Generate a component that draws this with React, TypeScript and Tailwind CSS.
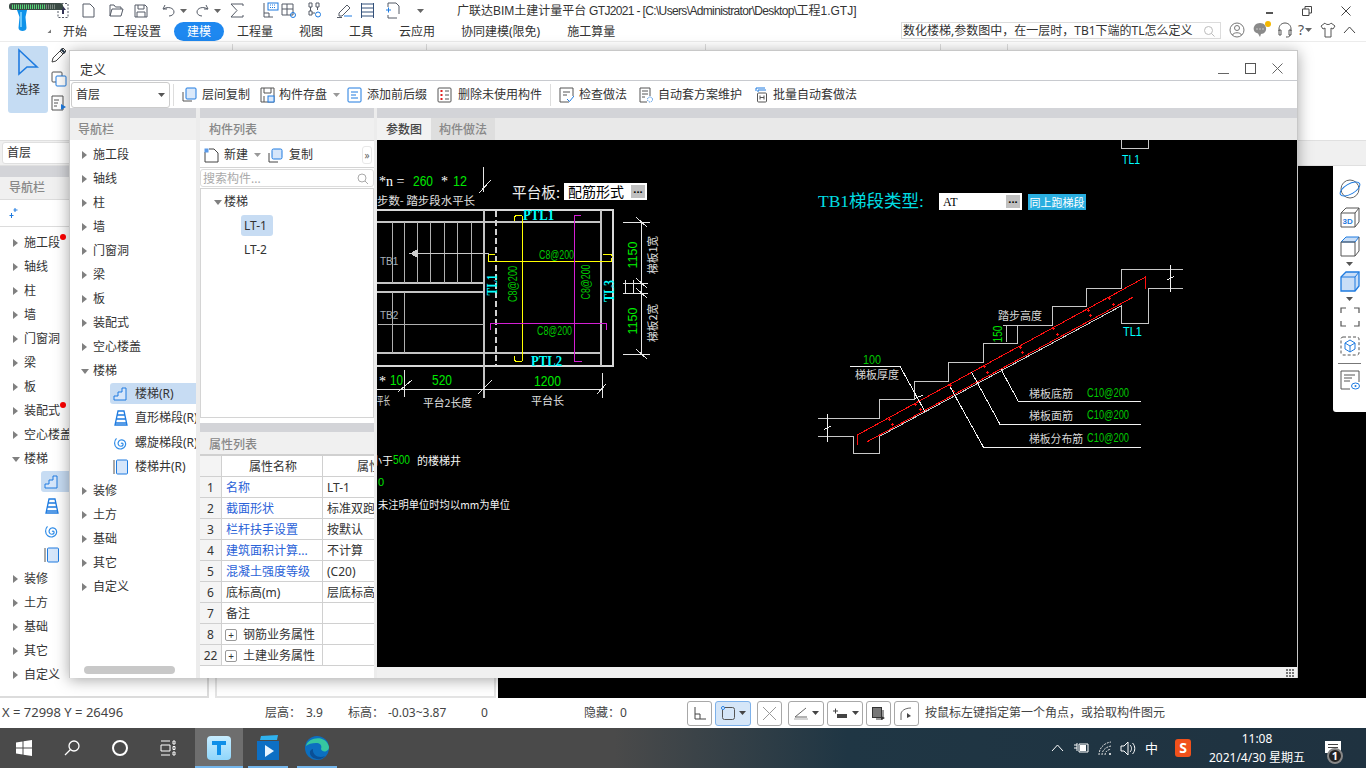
import React from "react";

const B = "#1e7be0";
const G = "#555b66";

function I({ children, w = 16, h = 16 }: { children: React.ReactNode; w?: number; h?: number }) {
  return (
    <svg width={w} height={h} viewBox={`0 0 ${w} ${h}`} fill="none" stroke={G} strokeWidth={1} className="shrink-0">
      {children}
    </svg>
  );
}
const Drop = ({ c = "#666" }: { c?: string }) => (
  <svg width="7" height="4" viewBox="0 0 7 4" className="shrink-0"><path d="M0 0h7L3.5 4z" fill={c} /></svg>
);
const RightTri = () => (
  <svg width="5" height="8" viewBox="0 0 5 8" className="shrink-0"><path d="M0 0l5 4-5 4z" fill="#808080" /></svg>
);
const DownTri = () => (
  <svg width="8" height="5" viewBox="0 0 8 5" className="shrink-0"><path d="M0 0h8L4 5z" fill="#808080" /></svg>
);

const StairIcon = () => (
  <I w={14} h={14}><path d="M1 13h12V1H9v4H5v4H1z" stroke={B} fill="#d6e6fa" /></I>
);
const FlightIcon = () => (
  <I w={16} h={16}><path d="M5 1h6l3 14H2zM4.4 5h7.2M3.5 9h9M2.6 13h10.8" stroke={B} strokeWidth={1.3} /></I>
);
const SpiralIcon = () => (
  <I w={16} h={16}><path d="M8 8.5c1-1 2.5 0 2 1.5-.6 1.7-3.6 1.7-4.6-.3C4.3 7.5 6 4.5 9 4.8c3 .3 4.5 3.7 3.2 6.3C10.8 14 6.5 15 3.8 12.8 1 10.5.8 6 3.5 3.3" stroke="#2f8ce8" strokeWidth={1.2} /></I>
);
const WellIcon = () => (
  <I w={16} h={16}><path d="M1 1v14" stroke="#555" /><rect x="3.5" y="1" width="11" height="14" rx="1" stroke={B} fill="#d6e6fa" /></I>
);

function Tree({ items }: { items: string[] }) {
  return (
    <>
      {items.map((t) => (
        <div key={t} className="flex h-6 items-center">
          <span className="flex w-[5px]"><RightTri /></span>
          <span className="ml-[6px] whitespace-nowrap">{t}</span>
        </div>
      ))}
    </>
  );
}

function T({ x, y, c = "#fff", s = 11, rot, f, w, children }: { x: number; y: number; c?: string; s?: number; rot?: number; f?: string; w?: number; children: React.ReactNode }) {
  return (
    <text
      x={x}
      y={y}
      fill={c}
      stroke="none"
      fontSize={s}
      dominantBaseline="central"
      textAnchor={rot ? "middle" : "start"}
      textLength={w}
      lengthAdjust={w ? "spacingAndGlyphs" : undefined}
      fontFamily={f ?? "'Noto Sans CJK SC', sans-serif"}
      transform={rot ? `rotate(${rot} ${x} ${y})` : undefined}
      textRendering="optimizeSpeed"
    >
      {children}
    </text>
  );
}

const MONO = "'Liberation Sans', sans-serif";
const SER = "'Liberation Serif', 'Noto Sans CJK SC', serif";
const Sx = (z: number) => 800 + z / 3;
const Sy = (z: number) => 140 + z / 3;
const P = (pts: number[]) => {
  let s = "";
  for (let i = 0; i < pts.length; i += 2) s += `${Sx(pts[i])},${Sy(pts[i + 1])} `;
  return s;
};

function Cad() {
  const stepsA = [392, 404, 417, 430, 444, 457, 471];
  const dotsA = [[268, 838], [345, 792], [450, 736], [553, 679], [660, 622], [760, 565], [865, 510], [928, 475], [278, 853], [362, 808], [460, 755], [562, 697], [667, 637], [772, 583], [871, 526], [940, 493]];
  return (
    <svg viewBox="377 140 920 527" width="920" height="527" className="block">
      <rect x="377" y="140" width="920" height="527" fill="#000" />
      <g shapeRendering="crispEdges" fill="none">
        <g stroke="#c4c4c4" strokeWidth={2}>
          <path d="M377 210H613V366H377" stroke="#d8d8d8" />
          <path d="M377 222H601M484 210V398M601 210V366M377 283H484M377 292H484M377 353H601" />
        </g>
        <path d="M496 211V366" stroke="#d0d0d0" strokeWidth={2} strokeDasharray="6 3" />
        <g stroke="none" fill="#b0b0b0">
          {stepsA.map((x) => <rect key={x} x={x} y={222} width={1} height={61} />)}
          <rect x={392} y={292} width={1} height={61} />
          <rect x={404} y={292} width={1} height={61} />
          <rect x={378} y={324} width={106} height={1} />
        </g>
        <path d="M409 253.5H488V261" stroke="#c8c8c8" />
        <path d="M417 250V257L411 253.5z" fill="#ccc" stroke="#ccc" />
        <g stroke="#ffff00">
          <path d="M522 215Q522 215 518 215T514 221" />
          <path d="M522 361Q522 362 518 362T514 356" />
          <path d="M489 261Q487 254 491 254T494 255" />
          <path d="M611 261Q614 254 609 254T603 254" />
        </g>
        <g stroke="none" fill="#ffff00">
          <rect x={522} y={216} width={1} height={145} />
          <rect x={488} y={261} width={124} height={1} />
        </g>
        <g stroke="none" fill="#d41fd4">
          <rect x={574} y={215} width={1} height={147} />
          <rect x={574} y={215} width={7} height={1} />
          <rect x={574} y={361} width={8} height={1} />
          <rect x={490} y={323} width={117} height={1} />
          <rect x={490} y={323} width={1} height={7} />
          <rect x={606} y={323} width={1} height={7} />
        </g>
        <g stroke="#e6e6e6">
          <path d="M623 222H650M623 283H648M623 293H648M623 354H650M641.5 222V354M625.5 280V293M633.5 280V293" />
          <path d="M636 217L647 227M636 278L647 288M636 288L647 298M636 349L647 359" />
          <path d="M377 389.5H602M404.5 370V397M602.5 373V398M483.5 167V192M479 193L491 180M398 392L412 380M478 394L492 380M597 394L606 384" />
        </g>
        <g stroke="#c8c8c8">
          <polyline points={P([54, 835, 238, 835, 238, 778, 342, 778, 342, 724, 445, 724, 445, 667, 550, 667, 550, 610, 653, 610, 653, 556, 757, 556, 757, 499, 860, 499, 860, 445, 965, 445, 965, 388, 1148, 388])} />
          <polyline points={P([54, 889, 160, 889, 160, 940, 239, 940, 239, 889, 965, 497, 965, 550, 1045, 550, 1045, 445, 1148, 445])} />
          <polyline points={P([965, 0, 965, 25, 1045, 25, 1045, 0])} />
          <polyline points={P([610, 556, 653, 556])} />
          <polyline points={P([620, 556, 620, 606])} />
        </g>
        <g stroke="#ff1010">
          <polyline points={P([172, 915, 172, 885, 1035, 412, 1035, 448])} />
          <polyline points={P([202, 905, 998, 472])} />
          {dotsA.map(([a, b]) => (
            <path key={`${a}-${b}`} d={`M${Sx(a) - 1.5} ${Sy(b)}h3M${Sx(a)} ${Sy(b) - 1.5}v3`} />
          ))}
        </g>
        <g stroke="#f2f2f2">
          <polyline points={P([602, 686, 655, 784, 1022, 784])} />
          <polyline points={P([515, 697, 600, 853, 1022, 853])} />
          <polyline points={P([450, 740, 550, 921, 1022, 921])} />
          <polyline points={P([150, 679, 300, 679, 375, 815])} />
          <polyline points={P([82, 822, 82, 905])} />
          <polyline points={P([72, 868, 92, 858])} />
          <polyline points={P([1112, 376, 1112, 455])} />
          <polyline points={P([1102, 420, 1122, 410])} />
          <polyline points={P([345, 775, 368, 766])} />
        </g>
      </g>

      <T x={379} y={181} s={14} f={SER}>*n = </T>
      <T x={413} y={181} s={14} c="#00e800" f={MONO} w={20}>260</T>
      <T x={441} y={181} s={14} f={SER}>*</T>
      <T x={453} y={181} s={14} c="#00e800" f={MONO} w={14}>12</T>
      <T x={377} y={200} s={11} c="#e0e0e0" w={98}>步数- 踏步段水平长</T>
      <T x={512} y={191} s={15} c="#ececec" w={48}>平台板:</T>
      <T x={380} y={261} s={10} c="#a8b0b8" f={MONO}>TB1</T>
      <T x={380} y={315} s={10} c="#a8b0b8" f={MONO}>TB2</T>
      <T x={523} y={215} s={14} c="#00ffff" f={SER} w={31}><tspan fontWeight="bold">PTL1</tspan></T>
      <T x={531} y={361} s={14} c="#00ffff" f={SER} w={31}><tspan fontWeight="bold">PTL2</tspan></T>
      <T x={492} y={285} s={14} c="#00ffff" f={SER} rot={-90} w={21}><tspan fontWeight="bold">TL1</tspan></T>
      <T x={609} y={291} s={14} c="#00ffff" f={SER} rot={-90} w={22}><tspan fontWeight="bold">TL3</tspan></T>
      <T x={539} y={255} s={12} c="#00c800" f={MONO} w={35}>C8@200</T>
      <T x={537} y={331} s={12} c="#00c800" f={MONO} w={35}>C8@200</T>
      <T x={513} y={284} s={12} c="#00c800" f={MONO} rot={-90} w={36}>C8@200</T>
      <T x={586} y={282} s={12} c="#00c800" f={MONO} rot={-90} w={35}>C8@200</T>
      <T x={632} y={255} s={13} c="#00f000" f={MONO} rot={-90} w={27}>1150</T>
      <T x={632} y={321} s={13} c="#00f000" f={MONO} rot={-90} w={27}>1150</T>
      <T x={652} y={255} s={11} c="#e0e0e0" rot={-90} w={38}>梯板1宽</T>
      <T x={652} y={323} s={11} c="#e0e0e0" rot={-90} w={38}>梯板2宽</T>
      <T x={379} y={381} s={14} f={SER}>*</T>
      <T x={390} y={380} s={14} c="#00e800" f={MONO} w={13}>10</T>
      <T x={432} y={380} s={14} c="#00e800" f={MONO} w={20}>520</T>
      <T x={534} y={381} s={14} c="#00e800" f={MONO} w={27}>1200</T>
      <T x={377} y={400} s={11} c="#e0e0e0" w={13}>平长</T>
      <T x={423} y={402} s={11} c="#e0e0e0" w={49}>平台2长度</T>
      <T x={531} y={400} s={11} c="#e0e0e0">平台长</T>
      <T x={371} y={460} s={11} c="#f4f4f4">小于</T>
      <T x={393} y={460} s={12} c="#00e000" f={MONO} w={17}>500</T>
      <T x={417} y={460} s={11} c="#f4f4f4">的楼梯井</T>
      <T x={378} y={482} s={11} c="#00e000" f={MONO}>0</T>
      <T x={378} y={504} s={11} c="#f4f4f4" w={132}>未注明单位时均以mm为单位</T>

      <T x={1122} y={160} s={12} c="#00ffff" f={MONO} w={18}>TL1</T>
      <T x={1123} y={332} s={12} c="#00ffff" f={MONO} w={19}>TL1</T>
      <T x={818} y={201} s={17.5} c="#00dce0" f={SER}>TB1梯段类型:</T>
      <T x={998} y={315} s={11} c="#d8d8d8">踏步高度</T>
      <T x={998} y={334} s={12} c="#00e000" f={MONO} rot={-90} w={17}>150</T>
      <T x={863} y={360} s={12} c="#00c800" f={MONO} w={18}>100</T>
      <T x={855} y={374} s={11} c="#d8d8d8">梯板厚度</T>
      <T x={1029} y={393} s={11} c="#d8d8d8">梯板底筋</T>
      <T x={1029} y={415} s={11} c="#d8d8d8">梯板面筋</T>
      <T x={1029} y={438} s={11} c="#d8d8d8" w={54}>梯板分布筋</T>
      <T x={1087} y={393} s={12} c="#00c800" f={MONO} w={42}>C10@200</T>
      <T x={1087} y={415} s={12} c="#00c800" f={MONO} w={42}>C10@200</T>
      <T x={1087} y={438} s={12} c="#00c800" f={MONO} w={42}>C10@200</T>
    </svg>
  );
}

function CadCombo({ label, mono }: { label: string; mono?: boolean }) {
  return (
    <div className={`flex h-[17px] w-[83px] items-center justify-between bg-white pl-1 pr-[2px] text-black ${mono ? "text-[12px]" : "text-[14px]"}`}>
      <span className={`whitespace-nowrap leading-none ${mono ? "[font-family:'Liberation_Serif',serif]" : ""}`}>{label}</span>
      <span className="flex h-[13px] w-[14px] items-center justify-center bg-[#c0c0c0] text-[11px] font-bold leading-none">···</span>
    </div>
  );
}

const propRows: [string, string, boolean][] = [
  ["名称", "LT-1", true],
  ["截面形状", "标准双跑", true],
  ["栏杆扶手设置", "按默认", true],
  ["建筑面积计算...", "不计算", true],
  ["混凝土强度等级", "(C20)", true],
  ["底标高(m)", "层底标高", false],
  ["备注", "", false],
];

function BottomBtn({ w, active, children }: { w: string; active?: boolean; children: React.ReactNode }) {
  return (
    <div className={`flex h-[25px] items-center justify-center gap-[3px] rounded-[3px] border ${w} ${active ? "border-[#7db1ea] bg-[#d5e6f8]" : "border-[#a8a8a8] bg-white"}`}>
      {children}
    </div>
  );
}

export default function App() {
  return (
    <div className="relative flex h-[768px] w-[1366px] flex-col overflow-hidden bg-white text-[12px] text-[#333] [font-family:'Noto_Sans','Noto_Sans_CJK_SC',sans-serif]">
      {/* title row */}
      <div className="relative flex h-[21px] shrink-0 items-center">
        <svg width="56" height="34" viewBox="0 0 56 34" className="absolute left-[8px] top-0">
          <rect x="1" y="3" width="54" height="7" rx="3" fill="#3a4a44" />
          {Array.from({ length: 22 }).map((_, i) => (
            <rect key={i} x={4 + i * 2} y="4.5" width="1" height="4.5" fill={i < 17 ? "#55d977" : "#7a8a80"} />
          ))}
          <path d="M9 10h10l-1.5 7 1 11c0 4-8 4-8 0l1-11z" fill="#0f93ea" />
          <path d="M12 12h2v15h-2z" fill="#69c7fb" />
          <path d="M43 33l-3.5 0 3.5-3.5z" fill="#777" />
        </svg>
        <div className="ml-[57px] flex w-[12px] justify-center"><I w={12} h={15}><path d="M1 .5h10v14H1z" strokeDasharray="2 1.5" /><path d="M6 3l3 4H7v4H5V7H3z" fill="#335" stroke="none" /></I></div>
        <div className="ml-[12px] flex w-[14px] justify-center"><I w={13} h={15}><path d="M1 1h7l4 4v9H1z" /></I></div>
        <div className="ml-[14px]"><I w={15} h={13}><path d="M1 12V1h4l1.5 2H12v2M1 12l2-7h11l-2 7z" /></I></div>
        <div className="ml-[10px]"><I w={14} h={14}><path d="M1 1h10l2 2v10H1zM4 1v4h6V1M3 13V8h8v5" /></I></div>
        <div className="ml-[14px] flex items-center gap-[5px]"><I w={13} h={13}><path d="M3 1L1 5h4M1.5 5C6 2 12 4 12 8c0 2-2 4-5 4" /></I><Drop /></div>
        <div className="ml-[9px] flex items-center gap-[5px]"><I w={13} h={13}><path d="M10 1l2 4H8M11.5 5C7 2 1 4 1 8c0 2 2 4 5 4" /></I><Drop /></div>
        <div className="ml-[9px]"><I w={14} h={15}><path d="M13 3V1H1l6 6.5L1 14h12v-2" /></I></div>
        <div className="ml-[19px]"><I w={16} h={17}><path d="M1 1v14h9M1 11h5v4" /><rect x="5" y="1" width="10" height="7" stroke={B} /><path d="M7 3h6M7 5.5h6" stroke={B} strokeDasharray="1 1" /></I></div>
        <div className="ml-[2px]"><I w={16} h={16}><path d="M1 1h11v11H1zM1 6h11M6 1v11" /><circle cx="12" cy="12" r="2.5" stroke={B} /></I></div>
        <div className="ml-[9px]"><I w={16} h={17}><path d="M3 1h3v4H3zM10 1h3v4h-3zM3 9h3v4H3zM4.5 5v4M11.5 5v3M6 11h3" /><circle cx="12" cy="12.5" r="2.5" stroke={B} /></I></div>
        <div className="ml-[15px]"><I w={16} h={15}><path d="M2 10l8-8 3 3-8 8H2zM0 14.5h5" /><path d="M7 13h8" stroke={B} /></I></div>
        <div className="ml-[7px]"><I w={15} h={17}><path d="M1.5 1v15M13.5 1v15M1.5 2h12M1.5 6h12M1.5 10h12M1.5 14h12" stroke="#33507a" /></I></div>
        <div className="ml-[10px]"><I w={16} h={17}><path d="M3 1h8l3 3v8M3 1v4M3 13v3h9" /><path d="M1 8h5M3.5 5.5v5" stroke={B} /></I></div>
        <div className="ml-[16px]"><Drop /></div>
        <span className="ml-[33px] whitespace-nowrap [font-family:'Liberation_Sans','Noto_Sans_CJK_SC',sans-serif]">广联达BIM土建计量平台<span className="tracking-[-0.65px]"> GTJ2021 - [C:\Users\Administrator\Desktop\</span>工程1.GTJ]</span>
        <div className="ml-auto mr-[15px] flex items-center gap-[29px]">
          <span className="mt-[5px] h-[2px] w-[7px] bg-[#555]" />
          <I w={10} h={10}><path d="M3 3V.5h6.5V7H7M.5 3H7v6.5H.5z" stroke="#444" /></I>
          <I w={10} h={10}><path d="M.5.5l9 9M9.5.5l-9 9" stroke="#444" /></I>
        </div>
      </div>

      {/* tab row */}
      <div className="relative flex h-[20px] shrink-0 items-center pt-[1px]">
        <span className="ml-[63px] w-[24px]">开始</span>
        <span className="ml-[26px] w-[48px]">工程设置</span>
        <span className="ml-[13px] flex h-[19px] w-[50px] items-center justify-center rounded-full bg-[#1e88f0] text-white">建模</span>
        <span className="ml-[13px] w-[36px]">工程量</span>
        <span className="ml-[26px] w-[24px]">视图</span>
        <span className="ml-[26px] w-[24px]">工具</span>
        <span className="ml-[26px] w-[36px]">云应用</span>
        <span className="ml-[26px] whitespace-nowrap">协同建模(限免)</span>
        <span className="ml-[27px] w-[48px]">施工算量</span>
        <div className="absolute left-[901px] top-[1px] flex h-[17px] w-[320px] items-center justify-between border border-[#dcdcdc] pl-[1px] pr-[5px]">
          <span className="whitespace-nowrap text-[#333]">{"数化楼梯,参数图中\uFF0C在一层时\uFF0CTB1下端的TL怎么定义"}</span>
          <I w={12} h={12}><circle cx="5.5" cy="5.5" r="4" stroke="#bbb" /><path d="M8.5 8.5l3 3" stroke="#bbb" /></I>
        </div>
        <div className="absolute left-[1229px] top-[1px] flex items-center">
          <I w={16} h={16}><circle cx="8" cy="8" r="7" stroke="#777" /><circle cx="8" cy="6" r="2.5" stroke="#777" /><path d="M3.5 13c1-3 8-3 9 0" stroke="#777" /></I>
          <div className="relative ml-[7px]"><I w={16} h={16}><path d="M8 1c8 0 8 11 1 11l-1 3-2-3.5C-1 10 1 1 8 1z" fill="#8a8a8a" stroke="none" /><path d="M4.5 7h1M7.5 7h1M10.5 7h1" stroke="#fff" /></I><span className="absolute -right-[3px] -top-[1px] h-[6px] w-[6px] rounded-full bg-[#f5b800]" /></div>
          <div className="ml-[9px]"><I w={16} h={16}><path d="M2 9V7c0-8 12-8 12 0v2M2 8h2v5H2zM12 8h2v5h-2zM13 13c0 2-2 2-4 2" stroke="#555" /></I></div>
          <span className="ml-[5px] text-[14px] leading-none text-[#555]">?</span>
          <span className="ml-[1px]"><Drop /></span>
          <div className="ml-[8px]"><I w={16} h={16}><path d="M5 1L1 4l2 3 2-1v9h6V6l2 1 2-3-4-3c-1 2-5 2-6 0z" stroke="#555" /></I></div>
          <div className="ml-[7px]"><I w={13} h={8}><path d="M1 7l5.5-6L12 7" stroke="#444" /></I></div>
        </div>
      </div>

      {/* ribbon */}
      <div className="relative flex h-[99px] shrink-0 items-start border-t border-[#ececec] pl-[8px] pt-[4px]">
        <span className="absolute left-[232px] top-[2px] h-[7px] w-px bg-[#ddd]" />
        <span className="absolute left-[426px] top-[2px] h-[7px] w-px bg-[#ddd]" />
        <span className="absolute left-[705px] top-[2px] h-[7px] w-px bg-[#ddd]" />
        <span className="absolute left-[940px] top-[2px] h-[7px] w-px bg-[#ddd]" />
        <span className="absolute left-[1007px] top-[2px] h-[7px] w-px bg-[#ddd]" />
        <div className="flex h-[67px] w-[40px] flex-col items-center rounded-[3px] bg-[#c5dcf3] pt-[2px]">
          <svg width="24" height="28" viewBox="0 0 24 28" fill="#c5dcf3" stroke={B} strokeWidth={1.6}><path d="M3 2l18 17H11l-8 7z" /></svg>
          <span className="mt-[5px]">选择</span>
        </div>
        <div className="ml-[3px] flex h-[67px] flex-col gap-[8px] pt-[1px]">
          <I w={16} h={16}><path d="M1 15l1-4 7-7 3 3-7 7zM9 4l3-3 3 3-3 3" stroke="#444" /><path d="M10 2l4 4" stroke="#234" strokeWidth={2} /></I>
          <I w={16} h={16}><rect x="1" y="1" width="10" height="10" rx="1" stroke="#555" /><rect x="5" y="5" width="10" height="10" rx="1" stroke={B} fill="#fff" /></I>
          <I w={16} h={16}><path d="M1 1h11v14H1zM3 5h5M3 8h4M3 11h3" stroke="#555" /><path d="M10 9l5 3-5 3z" fill={B} stroke="none" /></I>
        </div>
      </div>

      {/* floor selector strip */}
      <div className="flex h-[26px] shrink-0 border-y border-[#e0e0e0] bg-[#f0f0f0]">
        <div className="ml-[2px] mt-[1px] flex h-[22px] w-[200px] items-center rounded-[3px] border border-[#e0e0e0] bg-white pl-[4px]">首层</div>
      </div>

      {/* main */}
      <div className="flex h-[532px] shrink-0">
        <div className="flex w-[209px] flex-col border-b-2 border-r-2 border-[#dcdcdc]">
          <div className="h-[11px] shrink-0 bg-[#d3d4d8]" />
          <div className="flex h-[22px] shrink-0 items-center bg-[#f0f0f0] pl-[9px] font-medium text-[#888]">导航栏</div>
          <div className="flex h-[28px] shrink-0 items-center border-y border-[#dcdcdc] pl-[9px]">
            <I w={10} h={11}><path d="M6 0v4M4.5 2h4M2.5 5v5M0.5 7.5h4" stroke={B} /></I>
          </div>
          <div className="pl-[13px] pt-[4px]">
            <div className="relative"><Tree items={["施工段"]} /><span className="absolute left-[47px] top-[3px] h-[6px] w-[6px] rounded-full bg-[#f00]" /></div>
            <Tree items={["轴线", "柱", "墙", "门窗洞", "梁", "板"]} />
            <div className="relative"><Tree items={["装配式"]} /><span className="absolute left-[47px] top-[3px] h-[6px] w-[6px] rounded-full bg-[#f00]" /></div>
            <Tree items={["空心楼盖"]} />
            <div className="flex h-6 items-center"><span className="-ml-[1px] flex w-[6px]"><DownTri /></span><span className="ml-[6px]">楼梯</span></div>
            <div className="ml-[28px] flex h-[21px] w-[150px] items-center rounded-[3px] bg-[#c7dcf3] pl-[3px]"><StairIcon /></div>
            <div className="ml-[28px] flex h-[27px] items-center pl-[3px]"><FlightIcon /></div>
            <div className="ml-[28px] flex h-6 items-center pl-[3px]"><SpiralIcon /></div>
            <div className="ml-[28px] flex h-6 items-center pl-[3px]"><WellIcon /></div>
            <Tree items={["装修", "土方", "基础", "其它", "自定义"]} />
          </div>
        </div>
        <div className="ml-[6px] w-[281px] border-x-2 border-b-2 border-[#e4e4e4]" />
        <div className="ml-[2px] flex-1 bg-black" />
      </div>

      {/* status bar */}
      <div className="flex h-[30px] shrink-0 items-center whitespace-nowrap pl-[2px] text-[#444]">
        <span className="w-[263px] text-[13px]">X = 72998 Y = 26496</span>
        <span className="w-[41px]">{"层高\uFF1A"}</span>
        <span className="w-[42px]">3.9</span>
        <span className="w-[40px]">{"标高\uFF1A"}</span>
        <span className="w-[93px]">-0.03~3.87</span>
        <span className="w-[103px]">0</span>
        <span className="w-[36px]">{"隐藏\uFF1A"}</span>
        <span className="w-[67px]">0</span>
        <div className="flex items-center gap-[3px]">
          <BottomBtn w="w-[25px]"><I w={14} h={14}><path d="M2 1v12h11M2 8h5v5" stroke="#444" /></I></BottomBtn>
          <BottomBtn w="w-[36px]" active><I w={15} h={15}><rect x="1.5" y="1.5" width="12" height="12" rx="2" stroke="#555" /><circle cx="2" cy="2" r="1.5" fill="#fff" stroke={B} /></I><Drop c="#444" /></BottomBtn>
          <span className="w-0" />
          <BottomBtn w="w-[25px]"><I w={15} h={15}><path d="M1 1l13 13M14 1L1 14" stroke="#999" /></I></BottomBtn>
          <span className="w-0" />
          <BottomBtn w="w-[36px]"><I w={16} h={14}><path d="M2 11L13 2M2 11h12" stroke="#666" /><path d="M1 13h14" stroke="#aaa" /></I><Drop c="#444" /></BottomBtn>
          <BottomBtn w="w-[36px]"><I w={18} h={14}><path d="M2 5h5M4.5 2.5v5" stroke="#444" /><rect x="6" y="8" width="10" height="4" fill="#444" stroke="none" /></I><Drop c="#444" /></BottomBtn>
          <BottomBtn w="w-[25px]"><I w={15} h={15}><rect x="1.5" y="1.5" width="9" height="10" stroke="#333" fill="#777" /><path d="M12 4v9H5" stroke="#333" /><path d="M10 10l4 2-4 2z" fill="#333" stroke="none" /></I></BottomBtn>
          <BottomBtn w="w-[25px]"><I w={15} h={15}><path d="M2 14V8c0-3 4-6 10-6" stroke="#666" /><path d="M8 7l4 3-4 2z" fill="#444" stroke="none" /></I></BottomBtn>
        </div>
        <span className="ml-[6px]">{"按鼠标左键指定第一个角点\uFF0C或拾取构件图元"}</span>
      </div>

      {/* taskbar */}
      <div className="relative flex h-[40px] shrink-0 items-center bg-[linear-gradient(90deg,#4a4a4a_0%,#4a4a4a_45%,#1f3644_62%,#1f3240_100%)] text-white">
        <div className="ml-[16px] flex w-[16px] justify-center">
          <svg width="16" height="16" viewBox="0 0 16 16" fill="#fff"><path d="M0 2.5l6.5-1v6H0zM7.5 1.3L16 0v7.5H7.5zM0 8.5h6.5v6l-6.5-1zM7.5 8.5H16V16l-8.5-1.3z" /></svg>
        </div>
        <div className="ml-[32px] flex w-[16px] justify-center"><I w={16} h={16}><circle cx="10" cy="6" r="5" stroke="#fff" strokeWidth={1.3} /><path d="M6.5 9.5L1 15" stroke="#fff" strokeWidth={1.3} /></I></div>
        <div className="ml-[32px] flex w-[16px] justify-center"><span className="h-[16px] w-[16px] rounded-full border-2 border-white" /></div>
        <div className="ml-[32px] flex w-[16px] justify-center"><I w={16} h={16}><path d="M1 1h9M1 15h9M1 5h9v6H1zM13 1h2v3h-2zM13 6.5h2v3h-2zM13 12h2v3h-2z" stroke="#fff" /></I></div>
        <div className="relative ml-[19px] flex h-[40px] w-[48px] items-center justify-center bg-[#6e6e6e]">
          <div className="flex h-[24px] w-[24px] items-center justify-center rounded-[4px] bg-[linear-gradient(180deg,#c8edff,#8fd6fb)]">
            <svg width="16" height="16" viewBox="0 0 16 16"><path d="M1 1h14v4h-5v10H6V5H1z" fill="#0f8fe8" /></svg>
          </div>
          <span className="absolute bottom-0 left-0 h-[2px] w-full bg-[#74b6ec]" />
        </div>
        <div className="relative ml-[5px] flex h-[40px] w-[40px] items-center justify-center">
          <svg width="24" height="26" viewBox="0 0 24 26"><path d="M1 6h22v19H1z" fill="#0d6fc4" /><path d="M5 1l17-1-1 5H4z" fill="#2fb2ee" /><path d="M9 10l9 6-9 6z" fill="#e8f5ff" /></svg>
          <span className="absolute bottom-0 left-0 h-[2px] w-full bg-[#74b6ec]" />
        </div>
        <div className="relative ml-[9px] flex h-[40px] w-[40px] items-center justify-center">
          <svg width="24" height="24" viewBox="0 0 24 24"><circle cx="12" cy="12" r="12" fill="#0c6fc0" /><path d="M1 10C3 1 21-2 24 11c0 5-7 6-8 2 1-3 0-6-5-6-4 0-8 1-10 3z" fill="#36c6a0" /><path d="M8 13c-1 6 6 10 12 7-3 4-9 4-13 1-3-3-3-7 1-8z" fill="#0a4f96" /></svg>
          <span className="absolute bottom-0 left-0 h-[2px] w-full bg-[#74b6ec]" />
        </div>
        <div className="absolute left-[1051px] top-0 flex h-[40px] items-center">
          <I w={13} h={8}><path d="M1 7l5.5-6L12 7" stroke="#fff" /></I>
          <div className="ml-[9px]"><I w={16} h={12}><path d="M1 3h3M1 6h3M4 1v8M6 2h9v8H6z" stroke="#fff" /><rect x="7" y="3" width="6" height="6" fill="#fff" stroke="none" /></I></div>
          <div className="ml-[9px]"><I w={15} h={15}><path d="M1 14C1 7 6 2 13 1M4 14c0-5 4-8 9-9M7 14c0-3 2-5 6-6" stroke="#ddd" strokeDasharray="2 1" /><circle cx="12" cy="13" r="1" fill="#fff" stroke="none" /></I></div>
          <div className="ml-[7px]"><I w={16} h={15}><path d="M1 5h3l4-4v13l-4-4H1zM10 4c2 2 2 5 0 7M12.5 2c3 3 3 8 0 11" stroke="#fff" /></I></div>
          <span className="ml-[9px] w-[12px] text-[13px] leading-none">中</span>
          <div className="ml-[18px] flex h-[18px] w-[16px] items-center justify-center rounded-[3px] bg-[#f1511b] text-[14px] font-bold leading-none">S</div>
          <div className="ml-[16px] flex w-[100px] flex-col items-center leading-[19px]">
            <span>11:08</span>
            <span className="whitespace-nowrap">2021/4/30 星期五</span>
          </div>
          <div className="relative ml-[18px]">
            <I w={16} h={15}><path d="M0 0h16v12H8l-3 3v-3H0z" fill="#fff" stroke="none" /><path d="M3 3.5h10M3 6.5h10" stroke="#444" /></I>
            <span className="absolute left-[2px] top-[7px] flex h-[16px] w-[16px] items-center justify-center rounded-full border-2 border-[#888] bg-[#222] text-[11px] font-bold leading-none">1</span>
          </div>
        </div>
      </div>

      {/* floating view toolbar */}
      <div className="absolute left-[1333px] top-[166px] flex h-[246px] w-[33px] flex-col items-center rounded-bl-[3px] bg-white pt-[12px]">
        <I w={22} h={22}><ellipse cx="11" cy="11" rx="9" ry="9" stroke="#666" /><ellipse cx="11" cy="11" rx="11" ry="5" transform="rotate(-30 11 11)" stroke={B} /></I>
        <div className="mt-[7px]"><I w={20} h={21}><path d="M1 6h14v14H1zM1 6l5-5h13v14l-4 5M15 6l4-5" stroke="#555" /><text x="2.5" y="17" fontSize="8" fontWeight="700" fill={B} stroke="none" fontFamily="'Liberation Sans', sans-serif">3D</text></I></div>
        <div className="mt-[8px]"><I w={20} h={21}><path d="M1 6l5-5h13l-4 5z" fill="#c9def7" stroke={B} /><path d="M1 6h14v14H1zM15 20l4-5V1" stroke="#555" /></I></div>
        <div className="mt-[5px]"><Drop c="#555" /></div>
        <div className="mt-[5px]"><I w={20} h={21}><path d="M1 6l5-5h13v14l-4 5H1z" fill="#c9def7" stroke={B} strokeWidth={1.3} /><path d="M1 6h14v14M15 6l4-5" stroke={B} /></I></div>
        <div className="mt-[5px]"><Drop c="#555" /></div>
        <div className="mt-[6px]"><I w={20} h={20}><path d="M1 6V1h5M14 1h5v5M19 14v5h-5M6 19H1v-5" stroke="#555" strokeWidth={1.2} /></I></div>
        <div className="mt-[9px]"><I w={20} h={20}><rect x="1" y="1" width="18" height="18" rx="2" stroke="#555" strokeDasharray="3 2" /><path d="M10 4l5 3v6l-5 3-5-3V7zM5 7l5 3 5-3M10 10v6" stroke={B} /></I></div>
        <div className="mt-[7px] h-px w-[23px] bg-[#777]" />
        <div className="mt-[6px]"><I w={20} h={20}><path d="M10 19H1V1h18v11" stroke="#555" /><path d="M4 5h11M4 8h8M4 11h6" stroke="#555" /><ellipse cx="15.5" cy="16" rx="4" ry="3" stroke={B} /><circle cx="15.5" cy="16" r="1" fill={B} stroke="none" /></I></div>
      </div>

      {/* definition dialog */}
      <div className="absolute left-[69px] top-[50px] flex h-[628px] w-[1229px] flex-col border-x border-t border-[#c8c8c8] bg-white shadow-[0_2px_14px_rgba(0,0,0,0.35)]">
        <div className="relative flex h-[29px] shrink-0 items-center pl-[10px] pt-[8px] text-[13px] text-[#333]">
          定义
          <div className="absolute right-[14px] top-[12px] flex items-center gap-[16px]">
            <span className="mt-[9px] h-px w-[11px] bg-[#666]" />
            <span className="h-[11px] w-[11px] border border-[#555]" />
            <I w={11} h={11}><path d="M.5.5l10 10M10.5.5l-10 10" stroke="#666" /></I>
          </div>
        </div>
        <div className="flex h-[28px] shrink-0 items-center border-t border-[#c8cacf] text-[#333]">
          <div className="ml-[1px] flex h-[26px] w-[99px] items-center justify-between rounded-[3px] border border-[#ccc] px-[4px]">
            <span>首层</span><Drop c="#555" />
          </div>
          <span className="ml-[3px] h-[22px] w-px bg-[#ddd]" />
          <div className="ml-[8px]"><I w={15} h={16}><rect x="4" y="1" width="10" height="11" rx="1" stroke={B} fill="#dbe9fa" /><path d="M1 5v9h9" stroke="#555" /></I></div>
          <span className="ml-[5px] whitespace-nowrap">层间复制</span>
          <div className="ml-[10px]"><I w={15} h={16}><path d="M1 1h13v14H1zM4 1v5h7V1M4 15V9" stroke="#555" /><rect x="8" y="9" width="6" height="6" stroke={B} fill="#dbe9fa" /></I></div>
          <span className="ml-[4px] whitespace-nowrap">构件存盘</span>
          <span className="ml-[6px]"><Drop c="#999" /></span>
          <div className="ml-[7px]"><I w={15} h={16}><rect x="1" y="1" width="13" height="14" rx="1" stroke={B} /><path d="M4 5h7M4 8h5M4 11h7" stroke={B} /></I></div>
          <span className="ml-[5px] whitespace-nowrap">添加前后缀</span>
          <div className="ml-[10px]"><I w={15} h={16}><rect x="1" y="1" width="13" height="14" rx="1" stroke="#555" /><path d="M3.5 4h2M3.5 8h2M3.5 12h2" stroke="#e02020" strokeWidth={2} /><path d="M8 4h4M8 8h4M8 12h4" stroke="#555" /></I></div>
          <span className="ml-[6px] whitespace-nowrap">删除未使用构件</span>
          <span className="ml-[8px] h-[22px] w-px bg-[#ddd]" />
          <div className="ml-[8px]"><I w={15} h={16}><path d="M10 15H1V1h13v8" stroke="#555" /><path d="M4 5h7M4 8h4" stroke="#555" /><path d="M8 12l2.5 2.5L15 9" stroke={B} /></I></div>
          <span className="ml-[5px] whitespace-nowrap">检查做法</span>
          <div className="ml-[11px]"><I w={15} h={16}><path d="M9 15H2V1h10v8M4 4h6M4 7h6M4 10h3" stroke="#555" /><circle cx="12" cy="12.5" r="2.5" stroke={B} strokeDasharray="1 1" /></I></div>
          <span className="ml-[5px] whitespace-nowrap">自动套方案维护</span>
          <div className="ml-[13px]"><I w={12} h={16}><path d="M1 4V1h9" stroke={B} /><path d="M3 5V3h8" stroke={B} /><rect x="2.5" y="6" width="9" height="9" rx="1" stroke="#555" /><path d="M5 8.5v4M9 8.5v4M5 10.5h4" stroke="#555" /></I></div>
          <span className="ml-[6px] whitespace-nowrap">批量自动套做法</span>
        </div>

        <div className="flex min-h-0 flex-1">
          {/* nav */}
          <div className="flex w-[126px] shrink-0 flex-col overflow-hidden">
            <div className="h-[10px] shrink-0 bg-[#d3d4d8]" />
            <div className="flex h-[22px] shrink-0 items-center bg-[#f0f0f0] pl-[8px] pt-[1px] font-medium text-[#888]">导航栏</div>
            <div className="relative flex-1 pl-[12px] pt-[3px]">
              <Tree items={["施工段", "轴线", "柱", "墙", "门窗洞", "梁", "板", "装配式", "空心楼盖"]} />
              <div className="flex h-6 items-center"><span className="-ml-[1px] flex w-[6px]"><DownTri /></span><span className="ml-[6px]">楼梯</span></div>
              <div className="ml-[28px] flex h-[21px] items-center rounded-l-[3px] bg-[#c7dcf3] pl-[3px]"><StairIcon /><span className="ml-[8px]">楼梯(R)</span></div>
              <div className="ml-[28px] flex h-[27px] items-center whitespace-nowrap pl-[3px]"><FlightIcon /><span className="ml-[6px]">直形梯段(R)</span></div>
              <div className="ml-[28px] flex h-6 items-center whitespace-nowrap pl-[3px]"><SpiralIcon /><span className="ml-[6px]">螺旋梯段(R)</span></div>
              <div className="ml-[28px] flex h-6 items-center whitespace-nowrap pl-[3px]"><WellIcon /><span className="ml-[6px]">楼梯井(R)</span></div>
              <Tree items={["装修", "土方", "基础", "其它", "自定义"]} />
              <div className="absolute bottom-[4px] left-[14px] h-[8px] w-[91px] rounded-full bg-[#c8c8c8]" />
            </div>
          </div>
          <div className="w-[4px] shrink-0 bg-[#ececec]" />

          {/* component & property */}
          <div className="flex w-[174px] shrink-0 flex-col">
            <div className="h-[10px] shrink-0 bg-[#d3d4d8]" />
            <div className="flex h-[22px] shrink-0 items-center bg-[#f0f0f0] pl-[9px] pt-[1px] font-medium text-[#888]">构件列表</div>
            <div className="flex h-[28px] shrink-0 items-center border-y border-[#d4d4d4] pt-[2px]">
              <div className="ml-[4px]"><I w={15} h={15}><path d="M1 4V14h13V5l-4-4H5" stroke="#444" /><rect x="0.5" y="0.5" width="4" height="4" fill="#5a9ae8" stroke="none" /></I></div>
              <span className="ml-[5px]">新建</span>
              <span className="ml-[6px]"><Drop c="#999" /></span>
              <div className="ml-[7px]"><I w={15} h={15}><rect x="4" y="1" width="10" height="10" rx="1.5" stroke={B} fill="#d6e6fa" /><path d="M1 5v9h9" stroke="#444" /></I></div>
              <span className="ml-[6px]">复制</span>
              <span className="ml-auto mr-[2px] flex h-[18px] w-[10px] items-center justify-center rounded-[3px] border border-[#e8e8e8] text-[10px] leading-none text-[#666]">»</span>
            </div>
            <div className="mt-px flex h-[18px] shrink-0 items-center justify-between rounded-[3px] border border-[#dcdcdc] pl-[2px] pr-[5px] pt-[1px] text-[#aaa]">
              <span>搜索构件...</span>
              <I w={11} h={11}><circle cx="5" cy="5" r="4" stroke="#aaa" /><path d="M8 8l3 3" stroke="#aaa" /></I>
            </div>
            <div className="mt-[1px] h-[230px] shrink-0 border border-[#d4d4d4]">
              <div className="flex h-6 items-center pl-[13px] pt-[2px]"><DownTri /><span className="ml-[2px]">楼梯</span></div>
              <div className="ml-[40px] mt-[2px] flex h-[21px] w-[32px] items-center rounded-[3px] bg-[#c7dcf3] pl-[3px]">LT-1</div>
              <div className="ml-[40px] flex h-[27px] w-[32px] items-center pl-[3px]">LT-2</div>
            </div>
            <div className="h-[5px] shrink-0 bg-white" />
            <div className="h-[9px] shrink-0 bg-[#d3d4d8]" />
            <div className="flex h-[22px] shrink-0 items-center bg-[#f0f0f0] pl-[9px] pt-[3px] font-medium text-[#888]">属性列表</div>
            <div className="overflow-hidden border-t-2 border-[#d0d0d0]">
              <div className="flex h-[21px] w-[230px] border-b border-[#d0d0d0]">
                <span className="w-[22px] border-r border-[#d0d0d0] bg-[#f4f4f4]" />
                <span className="flex w-[101px] items-center justify-center border-r border-[#d0d0d0] pl-[2px] pt-[2px]">属性名称</span>
                <span className="w-[107px] pl-[34px] pt-[1px] leading-[20px]">属性值</span>
              </div>
              {propRows.map(([n, v, blue], i) => (
                <div key={n} className="flex h-[21px] w-[230px] border-b border-[#d0d0d0]">
                  <span className="flex w-[22px] items-center justify-center border-r border-[#d0d0d0] bg-[#f4f4f4] pt-[2px]">{i + 1}</span>
                  <span className={`flex w-[101px] items-center whitespace-nowrap border-r border-[#d0d0d0] pl-[4px] pt-[2px] ${blue ? "text-[#2a62d8]" : ""}`}>{n}</span>
                  <span className="flex w-[107px] items-center whitespace-nowrap pl-[4px] pt-[2px]">{v}</span>
                </div>
              ))}
              {[["8", "钢筋业务属性"], ["22", "土建业务属性"]].map(([k, n]) => (
                <div key={k} className="flex h-[21px] w-[230px] border-b border-[#d0d0d0]">
                  <span className="flex w-[22px] items-center justify-center border-r border-[#d0d0d0] bg-[#f4f4f4] pt-[2px]">{k}</span>
                  <span className="flex w-[101px] items-center whitespace-nowrap border-r border-[#d0d0d0] pl-[3px] pt-[2px]">
                    <span className="flex h-[12px] w-[12px] items-center justify-center rounded-[2px] border border-[#999] text-[10px] leading-none">+</span>
                    <span className="ml-[6px]">{n}</span>
                  </span>
                  <span className="w-[107px]" />
                </div>
              ))}
            </div>
          </div>
          <div className="w-[3px] shrink-0 bg-[#ececec]" />

          {/* parameter view */}
          <div className="relative flex min-w-0 flex-1 flex-col overflow-hidden">
            <div className="h-[10px] shrink-0 bg-[#d3d4d8]" />
            <div className="flex h-[22px] shrink-0 items-center bg-[#e9e9e9] font-medium">
              <span className="flex h-full w-[54px] items-center justify-center bg-[#f2f2f2] pt-[1px] text-[#444]">参数图</span>
              <span className="flex h-full w-[64px] items-center justify-center bg-[#dedede] pt-[1px] text-[#888]">构件做法</span>
            </div>
            <div className="relative h-[527px] shrink-0 bg-black">
              <Cad />
              <div className="absolute left-[187px] top-[43px]"><CadCombo label="配筋形式" /></div>
              <div className="absolute left-[562px] top-[53px]"><CadCombo label="AT" mono /></div>
              <div className="absolute left-[651px] top-[54px] flex h-[16px] w-[58px] items-center justify-center bg-[#29aee0] text-[11px] leading-none text-white">同上跑梯段</div>
            </div>
            <div className="flex flex-1 items-center justify-end bg-[#f0f0f0] pr-[3px]">
              <svg width="9" height="9" viewBox="0 0 9 9" fill="#777"><rect x="7" y="1" width="2" height="2" /><rect x="4" y="1" width="2" height="2" /><rect x="1" y="1" width="2" height="2" /><rect x="7" y="4" width="2" height="2" /><rect x="4" y="4" width="2" height="2" /><rect x="1" y="4" width="2" height="2" /><rect x="7" y="7" width="2" height="2" /><rect x="4" y="7" width="2" height="2" /><rect x="1" y="7" width="2" height="2" /></svg>
            </div>
          </div>
        </div>
      </div>
    </div>
  );
}
